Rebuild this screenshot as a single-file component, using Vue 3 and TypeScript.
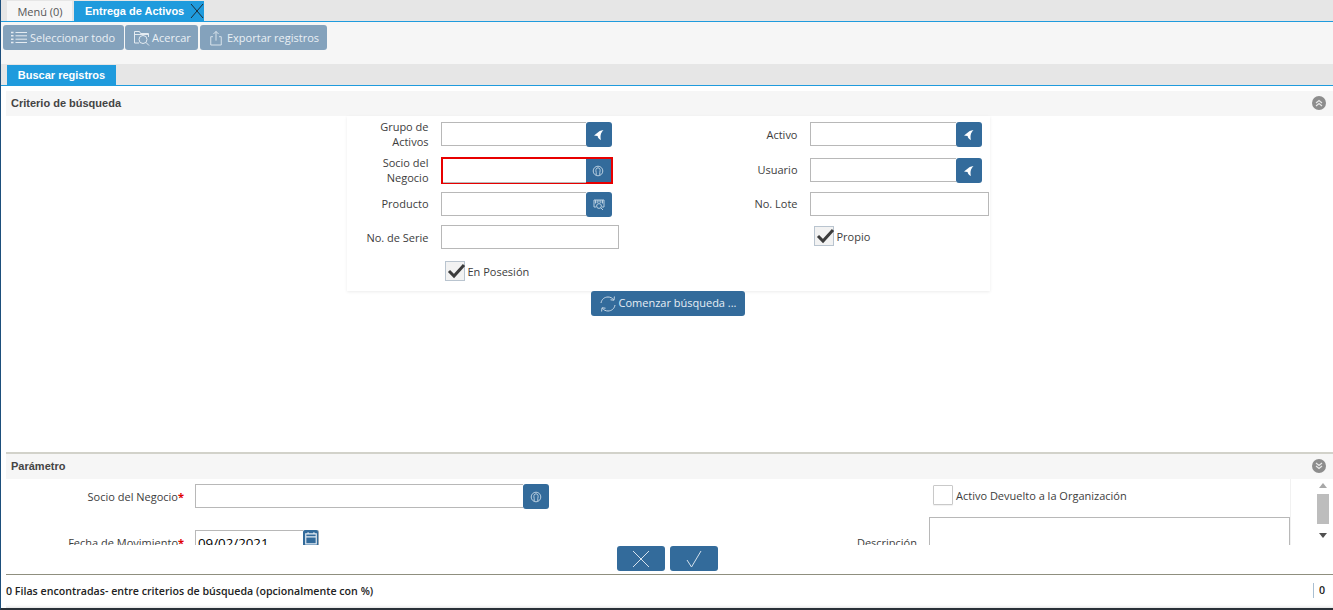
<template>
  <div class="window">
    <!-- Main tabs -->
    <div class="main-tabs">
      <div class="main-tab">Menú (0)</div>
      <div class="main-tab active">
        <span>Entrega de Activos</span>
        <svg class="tab-close" viewBox="0 0 14 16"><path d="M1 1 L13 15 M13 1 L1 15" /></svg>
      </div>
    </div>

    <!-- Toolbar -->
    <div class="toolbar">
      <button class="tool-btn select-btn">
        <svg class="tool-icon" viewBox="0 0 18 16">
          <path d="M5.5 2.5 H17 M5.5 5.8 H17 M5.5 9.2 H17 M5.5 12.5 H17" />
          <path d="M1 2.5 H3.5 M1 5.8 H3.5 M1 9.2 H3.5 M1 12.5 H3.5" stroke-width="1.6" />
        </svg>
        Seleccionar todo
      </button>
      <button class="tool-btn zoom-btn">
        <svg class="tool-icon" viewBox="0 0 18 16">
          <path d="M1.5 13 V1.5 H6.5 L7.5 3.5 H15.5 V7 M1.5 13 H6 M1.5 4.5 H15.5" />
          <circle cx="10" cy="9.5" r="4" />
          <path d="M13 12.5 L16 15.5" />
        </svg>
        Acercar
      </button>
      <button class="tool-btn export-btn">
        <svg class="tool-icon tall" viewBox="0 0 16 18">
          <path d="M4.5 7.5 H2 V17 H14 V7.5 H11.5 M8 12 V1.5 M5 4.5 L8 1.5 L11 4.5" />
        </svg>
        Exportar registros
      </button>
    </div>

    <!-- Window tabs -->
    <div class="sub-tabs">
      <div class="sub-tab">Buscar registros</div>
    </div>

    <div class="section-head criteria-head">
      <span>Criterio de búsqueda</span>
      <span class="collapse">
        <svg viewBox="0 0 8 8"><path d="M1 4 L4 1.5 L7 4 M1 7 L4 4.5 L7 7" /></svg>
      </span>
    </div>

    <!-- Search criteria -->
    <div class="criteria">
      <div class="search-form">
        <div v-for="row in searchRows" :key="row.left.label" class="row" :style="{ height: row.height + 'px' }">
          <template v-for="field in [row.left, row.right]" :key="field.label">
            <label class="field-label" :class="{ raise: field.raise, drop: field.drop }">
              {{ field.kind === 'check' ? '' : field.label }}
            </label>
            <div class="field-cell">
              <div v-if="field.kind === 'check'" class="check-wrap">
                <span class="checkbox">
                  <svg viewBox="0 0 20 20"><path d="M3 10 L8 15 L18 4" /></svg>
                </span>
                <span class="check-text">{{ field.label }}</span>
              </div>
              <div v-else-if="field.kind === 'empty'"></div>
              <input v-else-if="field.kind === 'text'" class="text-input wide" type="text" />
              <div v-else class="lookup" :class="{ invalid: field.invalid, drop: field.drop, long: field === row.right }">
                <input class="text-input" type="text" />
                <button class="lookup-btn">
                  <svg v-if="field.kind === 'arrow'" viewBox="0 0 12 12" class="arrow-icon">
                    <path d="M10.5 1 C7.5 1.5 5.5 2.5 4.5 3.8 L1 6.5 L4.6 7 C4.8 8.8 5.8 10.2 8 11 C7.4 9 7.4 7.2 7.8 5.6 C8.2 4 9.2 2.2 10.5 1 Z" />
                  </svg>
                  <svg v-else-if="field.kind === 'person'" viewBox="0 0 12 12" class="person-icon">
                    <circle cx="6" cy="6" r="4.8" />
                    <path d="M4.2 10 V7.5 C3.4 5 4 2.8 6 2.8 C8 2.8 8.6 5 7.8 7.5 V10" />
                  </svg>
                  <svg v-else viewBox="0 0 12 12" class="product-icon">
                    <path d="M1 1 H11 V8 H9 M1 1 V8 H3 M2.5 1 V4.5 M4.2 1 V4 M6 1 V3.5 M7.8 1 V4 M9.5 1 V4.5" />
                    <circle cx="6" cy="7" r="2.4" />
                    <path d="M7.7 8.7 L10 11" />
                  </svg>
                </button>
              </div>
            </div>
          </template>
        </div>
      </div>
      <button class="action-btn start-btn">
        <svg viewBox="0 0 18 18" class="refresh-icon">
          <path d="M2 8 C2.6 4.4 5.4 2 9 2 C11.4 2 13.4 3 14.6 4.8 M16 10 C15.4 13.6 12.6 16 9 16 C6.6 16 4.6 15 3.4 13.2" />
          <path d="M15.4 1.5 L15 5.2 L11.5 4.8 M2.6 16.5 L3 12.8 L6.5 13.2" />
        </svg>
        <span>Comenzar búsqueda ...</span>
      </button>
    </div>

    <!-- Parameters -->
    <div class="param-rule"></div>
    <div class="section-head param-head">
      <span>Parámetro</span>
      <span class="collapse">
        <svg viewBox="0 0 8 8"><path d="M1 1 L4 3.5 L7 1 M1 4 L4 6.5 L7 4" /></svg>
      </span>
    </div>
    <div class="params">
      <div class="param-scroll">
        <div class="param-left">
          <div class="param-row first">
            <label class="param-label">Socio del Negocio<em>*</em></label>
            <div class="lookup param-lookup">
              <input class="text-input" type="text" />
              <button class="lookup-btn">
                <svg viewBox="0 0 12 12" class="person-icon">
                  <circle cx="6" cy="6" r="4.8" />
                  <path d="M4.2 10 V7.5 C3.4 5 4 2.8 6 2.8 C8 2.8 8.6 5 7.8 7.5 V10" />
                </svg>
              </button>
            </div>
          </div>
          <div class="param-row second">
            <label class="param-label">Fecha de Movimiento<em>*</em></label>
            <div class="date-box">
              <input class="text-input date-input" type="text" value="09/02/2021" />
              <button class="date-btn">
                <svg viewBox="0 0 12 12"><path d="M1.5 2.5 H10.5 V11 H1.5 Z M1.5 5 H10.5 M3.5 1 V3 M8.5 1 V3" /></svg>
              </button>
            </div>
          </div>
        </div>
        <div class="param-right">
          <div class="returned">
            <span class="checkbox off"></span>
            <span class="check-text">Activo Devuelto a la Organización</span>
          </div>
          <div class="desc-row">
            <label class="desc-label">Descripción</label>
            <textarea class="desc-input"></textarea>
          </div>
        </div>
      </div>
      <div class="scrollbar">
        <span class="arrow up"></span>
        <span class="thumb"></span>
        <span class="arrow down"></span>
      </div>
    </div>

    <!-- Confirm -->
    <div class="confirm">
      <button class="action-btn confirm-btn">
        <svg viewBox="0 0 20 18"><path d="M2 1 L18 17 M18 1 L2 17" /></svg>
      </button>
      <button class="action-btn confirm-btn">
        <svg viewBox="0 0 20 18"><path d="M3 10 L7.5 17 L17 1" /></svg>
      </button>
    </div>

    <!-- Status -->
    <div class="status">
      <span>0 Filas encontradas- entre criterios de búsqueda (opcionalmente con %)</span>
      <span class="status-count">0</span>
    </div>
  </div>
</template>

<script setup lang="ts">
type Field = {
  label: string
  kind: 'arrow' | 'person' | 'product' | 'text' | 'check' | 'empty'
  invalid?: boolean
  raise?: boolean // label sits a pixel higher
  drop?: boolean // field sits a pixel lower
}

const searchRows: { height: number; left: Field; right: Field }[] = [
  { height: 35, left: { label: 'Grupo de Activos', kind: 'arrow', raise: true }, right: { label: 'Activo', kind: 'arrow' } },
  { height: 35, left: { label: 'Socio del Negocio', kind: 'person', invalid: true }, right: { label: 'Usuario', kind: 'arrow', drop: true } },
  { height: 33, left: { label: 'Producto', kind: 'product', raise: true }, right: { label: 'No. Lote', kind: 'text', raise: true } },
  { height: 35, left: { label: 'No. de Serie', kind: 'text' }, right: { label: 'Propio', kind: 'check' } },
  { height: 31, left: { label: 'En Posesión', kind: 'check' }, right: { label: ' ', kind: 'empty' } }
]
</script>

<style>
html, body {
  margin: 0;
  height: 100%;
  overflow: hidden;
  background: #fff;
}
</style>

<style scoped>
.window {
  height: 610px;
  display: flex;
  flex-direction: column;
  font-family: "Open Sans", "Noto Sans", sans-serif;
  font-size: 11px;
  color: #333;
  border-left: 1px solid #1d4f7c;
  border-bottom: 2px solid #2a3138;
  box-sizing: border-box;
  overflow: hidden;
}

button {
  font-family: inherit;
  cursor: pointer;
}

.main-tabs {
  height: 22px;
  flex: none;
  display: flex;
  gap: 2px;
  padding-left: 6px;
  padding-top: 1px;
  box-sizing: border-box;
  background: #e6e6e6;
  border-bottom: 1px solid #1f9bdd;
}

.main-tab {
  width: 65px;
  box-sizing: border-box;
  padding-left: 1px;
  display: flex;
  align-items: center;
  justify-content: center;
  background: #f6f6f6;
  color: #555;
}

.main-tab.active {
  width: 130px;
  background: #1f9bdd;
  color: #fff;
  font-family: "Liberation Sans", sans-serif;
  font-weight: 700;
  justify-content: flex-start;
  padding-left: 11px;
}

.tab-close {
  width: 14px;
  height: 16px;
  margin-left: auto;
  fill: none;
  stroke: #1c2d3a;
  stroke-width: 1;
}

.toolbar {
  height: 42px;
  flex: none;
  background: #f6f6f6;
  display: flex;
  gap: 1px;
  padding: 3px 0 0 2px;
  box-sizing: border-box;
}

.tool-btn {
  height: 25px;
  border: none;
  border-radius: 3px;
  background: #84a2bc;
  color: #eaf0f5;
  font-size: 11px;
  display: flex;
  align-items: center;
  padding: 0;
  gap: 1px;
}

.select-btn { width: 121px; padding-left: 7px; gap: 2px; }
.zoom-btn { width: 73px; padding-left: 8px; }
.export-btn { width: 127px; padding-left: 9px; margin-left: 1px; gap: 4px; }

.tool-icon {
  width: 18px;
  height: 16px;
  flex: none;
  fill: none;
  stroke: #e4ebf1;
  stroke-width: 1;
}

.tool-icon.tall {
  width: 14px;
  height: 16px;
}

.sub-tabs {
  height: 22px;
  flex: none;
  background: #e6e6e6;
  border-bottom: 1px solid #1f9bdd;
  padding-left: 6px;
  padding-top: 1px;
  box-sizing: border-box;
}

.sub-tab {
  width: 109px;
  height: 20px;
  background: #1f9bdd;
  color: #fff;
  font-family: "Liberation Sans", sans-serif;
  font-weight: 700;
  font-size: 11px;
  display: flex;
  align-items: center;
  justify-content: center;
}

.section-head {
  height: 25px;
  flex: none;
  background: #f6f6f6;
  margin-left: 5px;
  padding: 0 7px 1px 5px;
  box-sizing: border-box;
  display: flex;
  align-items: center;
  justify-content: space-between;
  font-family: "Liberation Sans", sans-serif;
  font-weight: 700;
  font-size: 11px;
  color: #444;
}

.criteria-head {
  margin-top: 5px;
}

.collapse {
  width: 14px;
  height: 14px;
  border-radius: 50%;
  background: #8d8d8d;
  display: flex;
  align-items: center;
  justify-content: center;
}

.collapse svg {
  width: 8px;
  height: 8px;
  fill: none;
  stroke: #e8e8e8;
  stroke-width: 1.2;
}

.criteria {
  height: 336px;
  flex: none;
  display: flex;
  flex-direction: column;
  align-items: center;
}

.search-form {
  width: 643px;
  height: 175px;
  box-sizing: border-box;
  padding-top: 6px;
  margin-left: 2px;
  box-shadow: 0 1px 3px rgba(0, 0, 0, 0.08);
}

.row {
  display: grid;
  column-gap: 12px;
  grid-template-columns: 82px 178px 167px 179px;
}

.field-label {
  height: 25px;
  display: flex;
  align-items: center;
  justify-content: flex-end;
  text-align: right;
  line-height: 15px;
  color: #3d3d3d;
  box-sizing: border-box;
}

.field-label.raise {
  padding-bottom: 2px;
}

.field-cell {
  min-width: 0;
}

.lookup {
  width: 171px;
  height: 25px;
  display: flex;
  box-sizing: border-box;
}

.lookup.long {
  width: 172px;
}

.lookup.drop {
  margin-top: 1px;
}

.lookup.invalid {
  height: 27px;
  width: 172px;
  margin-bottom: -2px;
  border: 2px solid #e80000;
}

.lookup.invalid .text-input {
  border: none;
  border-bottom: 1px solid #bbb;
}

.lookup.invalid .lookup-btn {
  border-radius: 0;
  height: 23px;
  width: 25px;
}

.text-input {
  flex: 1;
  min-width: 0;
  height: 24px;
  box-sizing: border-box;
  border: 1px solid #b8b8b8;
  border-right: none;
  background: #fff;
  padding: 0 3px;
  margin: 0;
  outline: none;
  font-family: inherit;
}

.text-input.wide {
  width: 100%;
  display: block;
  border-right: 1px solid #b8b8b8;
}

.lookup-btn {
  width: 26px;
  height: 25px;
  flex: none;
  border: none;
  border-radius: 3px;
  background: #336b9b;
  padding: 0;
  display: flex;
  align-items: center;
  justify-content: center;
}

.lookup-btn svg {
  width: 12px;
  height: 12px;
}

.arrow-icon {
  fill: #fff;
}

.person-icon,
.product-icon {
  fill: none;
  stroke: #b9cfe0;
  stroke-width: 1;
}

.check-wrap {
  display: flex;
  align-items: center;
  gap: 3px;
  padding-left: 4px;
  margin-top: 1px;
}

.checkbox {
  width: 20px;
  height: 20px;
  flex: none;
  box-sizing: border-box;
  border: 1px solid #b9c4cf;
  background: #f2f2f2;
  display: block;
  position: relative;
}

.checkbox svg {
  position: absolute;
  left: 0;
  top: -1px;
  width: 20px;
  height: 20px;
  fill: none;
  stroke: #3c3c3c;
  stroke-width: 3;
}

.check-text {
  color: #3d3d3d;
}

.action-btn {
  border: none;
  border-radius: 3px;
  background: #336b9b;
  color: #e6eef5;
  font-size: 11px;
  display: flex;
  align-items: center;
  justify-content: center;
  padding: 0;
}

.start-btn {
  width: 154px;
  height: 25px;
  gap: 1px;
  margin-left: 2px;
  flex: none;
}

.start-btn span {
  padding-bottom: 2px;
}

.refresh-icon {
  width: 18px;
  height: 18px;
  fill: none;
  stroke: #c8d8e6;
  stroke-width: 1;
}

.param-rule {
  height: 2px;
  flex: none;
  margin-left: 5px;
  background: #d2d2ca;
}

.params {
  height: 66px;
  flex: none;
  margin-left: 5px;
  display: flex;
  overflow: hidden;
}

.param-scroll {
  flex: 1;
  min-width: 0;
  display: flex;
}

.param-left {
  width: 790px;
  flex: none;
}

.param-row {
  display: flex;
  column-gap: 11px;
}

.param-row.first {
  padding-top: 5px;
  height: 46px;
  box-sizing: border-box;
}

.param-row.second {
  padding-top: 5px;
}

.param-label {
  width: 178px;
  flex: none;
  height: 25px;
  display: flex;
  align-items: center;
  justify-content: flex-end;
  color: #3d3d3d;
}

.param-label em {
  color: #e00000;
  font-style: normal;
  font-weight: 700;
  font-size: 11px;
}

.param-lookup {
  width: 354px;
}

.date-box {
  display: flex;
  width: 123px;
  height: 25px;
}

.date-input {
  border-right: none;
  font-size: 13.3px;
  height: 25px;
  padding: 0 2px;
}

.date-btn {
  width: 15px;
  height: 25px;
  flex: none;
  border: none;
  background: #336b9b;
  padding: 1px 0 0;
  border-radius: 2px;
  box-shadow: 1px 0 0 #9aa7b2;
  display: flex;
  justify-content: center;
  align-items: flex-start;
}

.date-btn svg {
  width: 14px;
  height: 14px;
  fill: none;
  stroke: #e6eef5;
  stroke-width: 1;
}

.param-right {
  flex: 1;
  min-width: 0;
  box-shadow: 1px 0 0 #f1f1f1;
  margin-right: 25px;
}

.returned {
  display: flex;
  align-items: center;
  gap: 3px;
  margin: 6px 0 0 137px;
}

.checkbox.off {
  background: #fff;
  border-color: #c9c9c9;
  border-radius: 1px;
  box-shadow: 0 1px 1px rgba(0, 0, 0, 0.06);
}

.desc-row {
  display: flex;
  column-gap: 12px;
  margin-top: 12px;
}

.desc-label {
  width: 121px;
  flex: none;
  text-align: right;
  padding-top: 18px;
  color: #3d3d3d;
}

.desc-input {
  flex: 1;
  min-width: 0;
  height: 60px;
  margin: 0;
  box-sizing: border-box;
  border: 1px solid #b8b8b8;
  outline: none;
  resize: none;
}

.scrollbar {
  width: 16px;
  flex: none;
  margin-right: 2px;
  display: flex;
  flex-direction: column;
  align-items: center;
  padding-top: 4px;
  box-sizing: border-box;
  background: #fff;
}

.arrow {
  width: 0;
  height: 0;
  border-left: 4px solid transparent;
  border-right: 4px solid transparent;
}

.arrow.up {
  border-bottom: 5px solid #a8a8a8;
}

.arrow.down {
  border-top: 5px solid #505050;
  margin-top: 9px;
}

.thumb {
  width: 12px;
  height: 30px;
  margin-top: 6px;
  background: #bdbdbd;
}

.confirm {
  height: 29px;
  flex: none;
  display: flex;
  gap: 5px;
  padding: 1px 0 0 616px;
  box-sizing: border-box;
}

.confirm-btn {
  width: 48px;
  height: 25px;
}

.confirm-btn svg {
  width: 20px;
  height: 18px;
  fill: none;
  stroke: #d5e2ed;
  stroke-width: 1;
}

.status {
  flex: 1;
  margin-left: 5px;
  border-top: 1px solid #8f8f7f;
  box-shadow: inset 0 -3px 3px -2px rgba(0, 0, 0, 0.12);
  display: flex;
  align-items: center;
  justify-content: space-between;
  font-weight: 600;
  font-size: 10.65px;
  color: #222;
  padding: 0 8px 2px 0;
  box-sizing: border-box;
}

.status-count {
  border-left: 1px solid #a9bfd2;
  padding-left: 5px;
  line-height: 15px;
}
</style>
